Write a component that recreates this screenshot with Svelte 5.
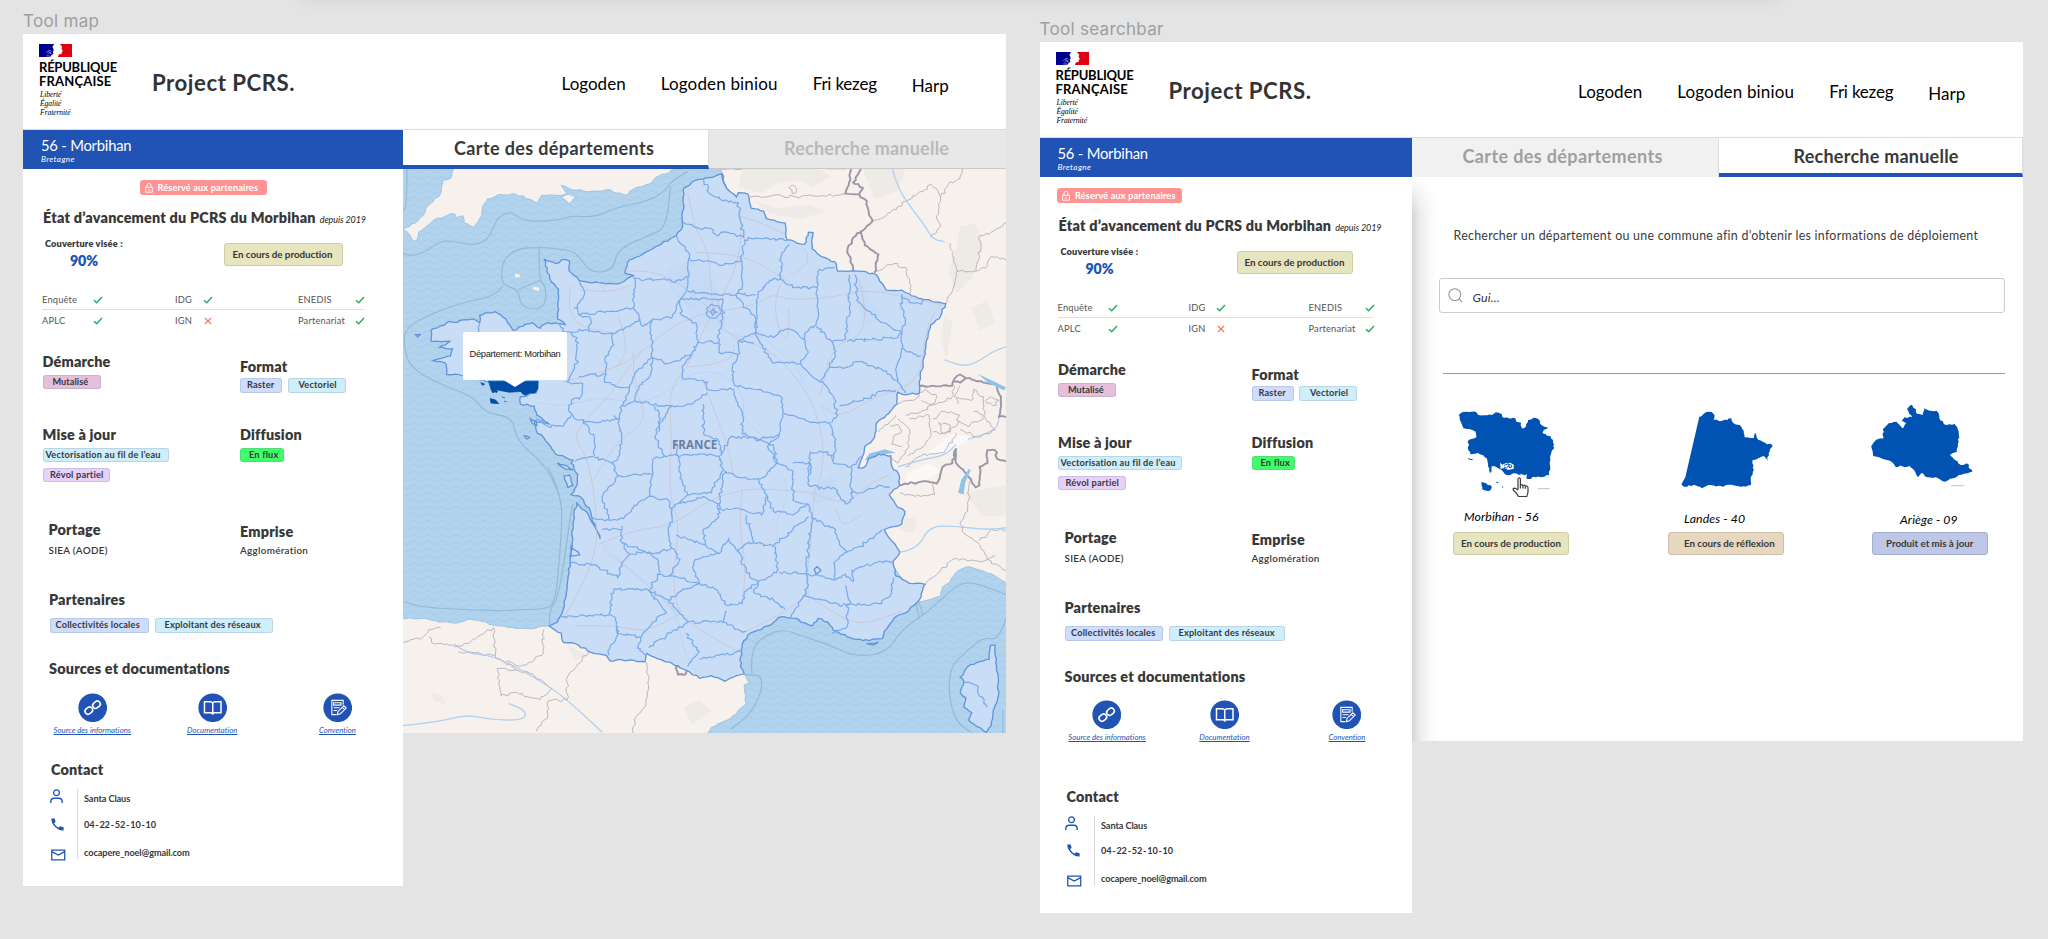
<script>
  // Deterministic noise gives the administrative borders their irregular edge.
  let seed = 7;
  function rnd() {
    seed = (seed * 16807) % 2147483647;
    return seed / 2147483647 - 0.5;
  }
  function rough(src, amp = 8, step = 9, close = false) {
    return src
      .trim()
      .split('|')
      .map((line) => {
        const p = line.trim().split(/\s+/).map((s) => s.split(',').map(Number));
        if (close) p.push(p[0]);
        let d = `M${p[0][0]},${p[0][1]}`;
        for (let i = 1; i < p.length; i++) {
          const [x0, y0] = p[i - 1];
          const [x1, y1] = p[i];
          const n = Math.max(1, Math.round(Math.hypot(x1 - x0, y1 - y0) / step));
          for (let k = 1; k <= n; k++) {
            const t = k / n;
            const a = k < n ? amp : 0;
            d += `L${(x0 + (x1 - x0) * t + rnd() * a).toFixed(1)},${(y0 + (y1 - y0) * t + rnd() * a).toFixed(1)}`;
          }
        }
        return close ? d + 'Z' : d;
      })
      .join('');
  }
  // Rounded polyline through the midpoints, for rivers, roads and sea limits.
  function smooth(src) {
    return src
      .trim()
      .split('|')
      .map((line) => {
        const p = line.trim().split(/\s+/).map((s) => s.split(',').map(Number));
        let d = `M${p[0]}`;
        for (let i = 1; i < p.length - 1; i++)
          d += `Q${p[i]} ${(p[i][0] + p[i + 1][0]) / 2},${(p[i][1] + p[i + 1][1]) / 2}`;
        return d + `L${p[p.length - 1]}`;
      })
      .join('');
  }

  const england = rough('140,20 130,50 110,55 105,90 70,125 60,150 25,180 8,187 20,195 35,220 45,215 48,195 90,160 140,145 145,155 162,150 165,170 190,182 210,150 215,120 225,105 260,93 300,93 330,105 355,115 365,95 400,95 430,90 425,85 415,68 440,80 490,85 530,80 580,95 605,75 640,65 660,45 690,35 705,20|415,100 435,92 455,100 435,118', 5, 9, true);
  const europe = rough('824,24 1570,20 1570,1150 1530,1125 1500,1112 1460,1100 1430,1115 1415,1140 1395,1155 1390,1180 1335,1195 1200,1000 1000,600|-5,1240 60,1240 100,1250 150,1252 175,1242 200,1245 240,1258 290,1265 330,1268 383,1260 500,1200 800,1300 885,1390 900,1415 885,1420 890,1470 850,1510 800,1535 785,1560 -5,1560', 4, 10, true);
  const france = rough('828,37 832,62 845,82 865,100 870,88 895,92 903,130 935,138 942,158 990,170 995,215 1040,228 1050,195 1062,196 1060,240 1085,262 1118,275 1125,300 1180,300 1225,310 1250,352 1290,352 1310,362 1340,375 1403,388 1385,430 1365,445 1352,500 1345,550 1335,600 1335,630 1300,635 1280,628 1278,660 1250,690 1225,712 1220,750 1195,775 1190,800 1178,832 1195,830 1205,808 1230,795 1262,800 1265,830 1282,850 1285,880 1258,905 1280,940 1298,950 1290,985 1245,1000 1260,1025 1285,1060 1268,1085 1275,1125 1310,1145 1350,1148 1335,1190 1300,1225 1270,1240 1245,1275 1240,1295 1190,1300 1150,1290 1120,1275 1100,1250 1075,1240 1060,1260 1030,1250 1020,1240 980,1235 945,1260 900,1280 880,1310 875,1370 885,1390 865,1395 835,1410 800,1395 770,1402 745,1385 700,1362 665,1350 635,1335 630,1358 590,1352 540,1355 530,1340 500,1335 450,1308 420,1305 415,1280 383,1260 405,1250 420,1215 430,1150 440,1060 447,960 455,928 485,960 515,1025 505,1000 490,950 465,912 440,905 455,880 457,850 440,820 445,812 400,795 375,760 350,730 345,705 385,715 352,690 345,665 310,660 310,640 350,630 355,600 300,620 230,600 150,580 120,580 118,550 85,542 130,530 135,510 100,508 130,490 80,490 80,460 120,440 190,430 205,440 205,420 245,410 265,425 290,460 340,440 360,455 380,440 425,445 405,430 408,350 385,320 370,268 400,280 415,270 435,272 435,300 460,325 530,335 560,335 600,312 578,305 590,270 650,240 710,205 725,185 730,75 760,55', 5, 9, true);
  const corsica = rough('1518,1312 1530,1312 1532,1360 1538,1400 1538,1450 1525,1490 1520,1530 1508,1548 1480,1530 1462,1515 1470,1495 1450,1480 1455,1455 1440,1440 1450,1410 1440,1400 1460,1370 1500,1355 1515,1350|335,700 350,705 352,718 340,712|320,746 333,750 326,755|405,820 430,828 445,838 425,836|422,855 436,852 445,880 432,886|40,472 52,472 46,478|440,1045 462,1068 440,1072|1065,1108 1072,1100 1082,1110 1070,1120|1200,1308 1230,1305 1215,1312', 4, 9, true);
  const borders = rough(`725,165 770,185 800,185 815,205 840,195 885,210|780,50 795,90 830,110 850,110 870,115 875,165 885,210|710,205 745,255 740,280 740,340 730,365 720,378|885,215 940,210 995,218|745,268 800,275 830,285 878,270|885,215 878,270 880,340 865,362 915,365|740,355 790,360 865,365|1000,228 980,260 978,320 950,325 920,365|978,322 1010,345 1072,345|1072,345 1075,300 1118,290|460,325 475,360 450,400 460,418 540,410 600,400 605,330 600,312|605,320 650,325 680,320 700,330 740,315|460,418 490,430 485,460 425,465 410,445|600,400 625,450 650,430 700,425 720,378|485,465 550,470 590,450 615,430|440,465 455,480 455,550 440,580 430,600 470,605 465,640 440,650|545,470 550,500 530,530 530,580 460,585|530,580 525,600 590,620 610,570 650,535|650,430 645,460 650,490 650,535 690,550 750,525 765,495|720,378 725,420 760,440 765,495 790,490 820,495|720,375 790,375 830,375 830,430 820,460 820,495|865,365 890,400 915,430 915,465 870,490 870,525 820,520 820,495|920,365 918,420 915,465 960,480 980,460 1010,460 1040,485|1072,345 1075,400 1070,445 1040,470 1040,485|1155,310 1155,400 1150,450 1145,485 1110,490 1070,450|1170,310 1175,380 1240,440 1290,465 1280,480 1150,490|1290,362 1290,400 1300,430 1290,465|1290,365 1310,385 1340,390 1345,375|1290,465 1290,510 1340,530|1290,510 1275,570 1280,600 1300,630|915,465 925,495 960,550 1030,550 1050,520 1040,485|1110,490 1120,530 1105,560 1080,600 1055,580 1030,550|1105,560 1150,560 1180,545 1250,570 1280,600|1130,665 1190,650 1240,625 1275,625|1080,600 1095,610 1115,640 1125,690 1110,710|870,490 910,495|870,525 855,560 860,610 910,620 980,640 985,680 975,745 920,755 880,740 880,690 860,625|650,535 640,590 615,610 605,650 570,665|750,525 725,560 725,590 790,600 790,620 860,620|605,650 670,665 700,665 750,660 790,630|590,620 570,665 565,700 550,690|440,650 435,680 450,700 500,710 560,700|350,700 380,720 420,720 440,690|470,705 500,750 500,800 450,815|560,700 570,760 560,810 545,820 500,805|545,820 560,855 600,850 650,850 650,810 680,800|655,665 670,700 655,750 680,800 715,800 710,760|700,665 675,700 665,735|780,660 780,740 820,760 825,800|715,800 770,795 820,800 830,840 800,900 740,905 720,860 715,800|825,800 850,750 900,750 960,770 970,820 930,860 880,860 835,840|985,685 1040,700 1055,710 1105,710 1120,770 1115,810|975,745 945,775 970,820|970,820 1010,840 1010,920 1050,930|1010,820 1050,820 1050,880 1090,890 1115,885|1055,850 1055,790 1100,790 1115,820 1160,830 1190,800|1160,830 1160,900 1190,900 1230,880 1260,885|1115,885 1145,930 1165,915 1160,900|650,850 640,910 600,940 575,970 540,975 520,915 560,855|640,910 690,920 700,970 690,1010 700,1050 650,1065 570,1035 570,990|570,1035 590,1065|740,905 700,940 700,970|720,930 780,910 820,930 820,965 780,1000 785,1040 710,1015|835,840 825,890 820,945 880,945 930,960 945,910 920,860|945,910 960,950 1010,960 1050,930|890,960 900,1000 910,1035 960,1045 1010,1000 1050,965|785,1040 820,1065 845,1025 870,1060 885,1040 910,1035|870,1060 890,1110 920,1145 970,1110 965,1045|820,1065 760,1080 755,1110 770,1145|1050,930 1060,970 1050,1050 1045,1120 975,1115|1060,970 1120,1000 1130,1040 1150,1060 1115,1090 1120,1135 1045,1120|1150,1060 1200,1035 1240,1000|1120,1135 1145,1120 1165,1140 1160,1110 1220,1090 1270,1085|1045,1120 1050,1150 1035,1185 1000,1240|1040,1180 1090,1190 1130,1205 1160,1200 1145,1150|1150,1200 1150,1260 1110,1280|1150,1205 1230,1200 1260,1180 1270,1130|920,1145 910,1170 960,1190 990,1215|770,1145 700,1125 660,1120|590,1065 640,1060 665,1085 665,1120 640,1165 590,1160 550,1160|440,1090 500,1095 560,1130 570,1090 590,1065|415,1235 500,1230 540,1230 545,1180 550,1160|640,1165 685,1225 650,1250 620,1290 560,1280 555,1240 540,1230|560,1260 560,1285 540,1320 535,1340|620,1290 610,1320 635,1340|700,1050 720,1080 690,1125|640,1165 690,1190 735,1160 770,1145 810,1160 840,1205 880,1200 890,1165 920,1145|690,1190 740,1250 700,1275 640,1320|740,1250 830,1250 840,1220|735,1280 770,1330 740,1370|770,1350 820,1340 875,1330|830,1250 870,1270 890,1275|490,965 540,975|520,1000 570,1000|205,440 200,475|788,400 800,390 820,395 825,412 812,428 795,425 788,412 788,400|796,410 806,402 815,412 804,420 796,410|1450,1410 1480,1420 1490,1450 1510,1480`, 8, 7);
  const frontier = rough('1160,20 1155,60 1145,90 1180,92 1200,110 1205,140 1215,165 1190,190 1165,210 1150,250 1165,290 1165,300|1185,190 1195,230 1230,255 1220,305|1185,24 1165,60 1190,75 1180,95|1335,612 1390,612 1420,610 1425,592 1440,580 1455,590 1440,602 1425,600|1455,590 1530,605 1545,640 1540,695 1558,695|1282,880 1340,870 1380,875 1395,830 1420,820 1430,780 1430,820 1465,860 1480,885 1490,880 1490,830 1510,820 1510,785 1530,785 1535,808 1558,815|828,37 832,62 845,82 865,100|710,1370 740,1372 735,1390 715,1392 710,1370', 6, 8);
  const regions = rough('900,100 960,95 1020,100 1145,92|1000,75 1012,68 1020,82 1008,90 1000,75|1215,165 1250,150 1300,112 1350,80 1365,65 1390,100 1380,150 1390,180 1365,210|1390,100 1410,65 1440,50 1450,20|1558,170 1520,195 1490,205 1490,260 1480,300 1430,300|1558,270 1520,260 1510,285 1480,300|1220,300 1270,280 1300,290 1315,340 1310,360|1415,225 1430,290 1425,340 1403,388|8,1305 60,1290 75,1270 105,1265|75,1290 90,1310 160,1315 200,1290 240,1265 245,1340 150,1330|245,1340 300,1380 340,1390 390,1430 360,1460 300,1440 260,1450 250,1375 300,1380|370,1270 365,1340 310,1370 275,1355|485,1325 455,1370 430,1400 430,1460 380,1465 380,1500 350,1545|635,1360 640,1400 630,1480 605,1510 600,1550|1285,900 1340,910 1375,905 1370,870|1465,860 1460,950 1440,980 1450,1010 1490,1040 1510,1080 1558,1110|1350,1148 1390,1110 1420,1080 1500,1085 1530,1070|1490,1030 1520,1000 1558,1000|1280,660 1320,650 1350,620 1380,640 1370,660 1340,650|1300,690 1340,680 1380,660 1420,640 1425,610|1280,700 1310,730 1305,780 1280,820 1260,800|1310,700 1360,690 1365,740 1350,770 1305,800|1370,700 1400,680 1440,690 1430,720 1400,740 1370,735|1430,640 1470,650 1475,620 1500,640 1500,700 1460,720 1430,700|1475,680 1500,690 1530,730 1490,750 1440,730|1440,610 1425,640 1435,660|1505,650 1520,640 1540,650 1525,665 1505,650|1300,830 1340,800 1400,790 1430,740|1260,720 1280,715 1290,735 1270,745 1265,770 1290,775|1385,710 1410,715 1415,735 1395,740 1385,710|1230,735 1255,715 1275,690', 8, 8);
  const seaLimits = smooth('8,252 30,262 70,245 110,215 160,225 200,230 230,210 250,155 280,140 300,150 320,165 400,165 440,150 500,155 550,130 640,110 680,85 695,60 740,30|695,70 690,180 640,205 560,240 548,300 490,305 460,260 440,245 400,240 360,235 300,240 265,270 260,320 270,340 305,350 310,395 350,405 375,390 375,340 358,325 358,235|305,350 360,325|265,340 248,368 160,385 60,425 12,460 10,500 25,560 100,605 190,640 220,685 290,695 300,760 370,820 410,900 418,960 410,1080 400,1190 380,1215 320,1215 260,1220 150,1215 60,1210 8,1195|380,830 405,880 415,940|445,930 438,960 425,1070 405,1190 385,1215 385,1255|875,1392 905,1392 930,1395 930,1440 900,1500 850,1540|905,1390 900,1320 950,1280 990,1270 1040,1290 1100,1310 1160,1340 1220,1340 1260,1320 1290,1270 1360,1220 1430,1150 1470,1140 1558,1175|1558,1240 1540,1300 1500,1290 1455,1330 1415,1370 1410,1450 1430,1520 1470,1550|1325,1195 1335,1240|1332,1190 1345,1230|18,24 18,120 8,140|1550,1490 1550,1550');
  const rivers = smooth('1265,20 1275,60 1300,110 1345,170 1370,215 1400,220|1400,540 1440,558 1480,550 1520,520 1558,505|1280,1062 1330,1055 1360,990 1430,990 1500,1000 1558,995|140,1310 170,1335 240,1340 340,1395 420,1450 520,1548|8,1530 100,1520 170,1500 240,1515 320,1515 325,1490 280,1470|1280,830 1340,810 1400,800 1430,770|1460,755 1530,735 1540,700|345,655 400,665 440,660 520,640 600,660 680,635 740,580 800,570 850,590 885,640 880,690 920,740 960,760|520,1035 560,1080 620,1130 680,1180 715,1240 730,1330 760,1380|820,455 880,485 920,470 960,500 1020,560 1045,615|990,860 1000,920 970,960 970,1040|1060,970 1050,1080 1050,1200|690,320 700,360 760,400');
  const roads = smooth('805,410 760,370 700,320 640,300 580,300|805,410 800,330 790,240 760,190 740,90|805,410 870,300 880,150 860,110|870,150 930,170 990,200|805,410 900,400 960,360 1000,380 1120,370 1200,350 1300,370 1390,390|805,410 840,480 930,500 1000,560 1060,650 1090,760 1085,850 1065,900|805,410 770,480 740,560 690,620 700,760 690,900 720,980 700,1130 715,1230 800,1290 870,1330|805,410 720,430 620,520 560,560 460,590 420,600|620,520 560,600 530,650 440,740 480,800 500,900 510,1040 470,1150 420,1240|600,520 600,620 640,700 560,760 500,860|510,1040 600,1000 700,990 790,920 880,890 960,890 1060,900|1065,900 1060,1000 1045,1120 1050,1180 960,1240 880,1280|1050,1180 1120,1230 1190,1260 1290,1220|1065,900 1140,940 1200,880 1260,850|715,1230 640,1150 520,1050|715,1230 640,1280 560,1260 450,1260|880,890 870,980 890,1100 880,1200|980,330 960,380 975,470 1000,490 1000,400|1180,320 1200,400 1185,480 1110,500 1080,640|1390,390 1350,440 1340,600 1220,640 1130,700 1080,660|460,350 530,360 590,340|530,360 510,330|560,420 590,500 560,560|440,340 420,440 560,470|780,600 840,760 860,860|740,560 850,550 860,500|1040,240 1060,270 1010,310|760,250 880,250 1000,330|1185,960 1140,1000 1120,940');

  const morbihan = rough('100,165 118,155 145,157 150,165 185,165 195,157 210,162 212,172 245,175 248,185 260,188 262,205 272,200 278,180 292,173 305,178 312,195 320,200 330,203 318,210 315,220 335,228 342,240 345,265 338,275 335,300 332,345 320,350 290,350 285,357 275,357 275,343 255,345 240,340 232,345 218,342 210,330 185,318 180,340 178,325 172,295 150,280 130,283 123,265 125,240 145,232 143,215 135,210 112,205 105,185|123,293 137,298 134,301 125,298|158,366 170,370 185,382 180,392 160,388|195,365 203,367 198,370|211,379 215,381 212,384', 5, 7, true);
  const landes = rough('720,170 742,155 757,165 755,180 775,183 790,180 800,175 806,190 822,195 832,212 834,232 858,234 862,218 870,240 906,256 896,280 894,302 884,288 870,295 855,300 858,330 852,348 850,375 825,380 800,374 780,380 740,375 725,385 705,374 680,380 672,373', 5, 7) + 'L682,352L718,170Z';
  const ariege = rough('1160,258 1172,240 1192,235 1190,208 1205,190 1225,185 1240,205 1250,190 1238,182 1245,172 1265,172 1252,148 1262,134 1275,148 1278,162 1292,165 1295,145 1310,152 1328,152 1335,175 1352,195 1375,192 1385,215 1385,245 1380,275 1362,285 1375,300 1390,315 1405,310 1420,335 1385,345 1370,355 1350,365 1325,352 1305,352 1290,338 1280,352 1270,330 1258,318 1222,320 1208,302 1180,292 1165,288', 5, 7, true);

  const results = [
    { id: 'mor', name: 'Morbihan - 56', status: 'En cours de production', d: morbihan, box: '85 105 298 315' },
    { id: 'lan', name: 'Landes - 40', status: 'En cours de réflexion', d: landes, box: '637.5 105 298 315' },
    { id: 'ari', name: 'Ariège - 09', status: 'Produit et mis à jour', d: ariege, box: '1162 105 298 315' }
  ];
</script>

{#snippet check()}
  <svg class="tick" viewBox="0 0 10 8"><path d="M1 4.2 3.7 6.8 9 1" fill="none" stroke="#27ae60" stroke-width="1.5" /></svg>
{/snippet}

{#snippet header()}
  <header>
    <div class="logo">
      <svg class="flag" viewBox="117 131 99 39">
        <path fill="#000091" d="M117 131H162L157 139 161 149 158 153 160 160 153 165 152 170H117Z" />
        <path fill="none" stroke="#fff" stroke-width="1.5" d="M138 157c5-7 12-8 16-5M142 161c4-5 9-5 12-1M139 166c6 1 10-1 14 3M147 153l7 8" />
        <path fill="#e1000f" d="M216 131H179L186 139 184 145 188 152 184 155 185 160 176 162 173 170H216Z" />
      </svg>
      <strong class="rf">RÉPUBLIQUE</strong>
      <strong class="rf fr">FRANÇAISE</strong>
      <span class="motto">Liberté<br />Égalité<br />Fraternité</span>
    </div>
    <h1>Project PCRS.</h1>
    <nav>
      <span>Logoden</span><span class="bin">Logoden biniou</span><span class="fri">Fri kezeg</span><span class="harp">Harp</span>
    </nav>
  </header>
{/snippet}

{#snippet sidebar()}
  <aside>
    <div class="place"><span>56 - Morbihan</span><em>Bretagne</em></div>
    <div class="body">
      <div class="reserved">
        <svg viewBox="0 0 8 10"><path d="M.6 4.2h6.8v5H.6zM2 4.2V2.4a2 2 0 0 1 4 0v1.8M2.8 6.9h2.4" fill="none" stroke="#fff" stroke-width=".9" /></svg>
        <span>Réservé aux partenaires</span>
      </div>
      <div class="title"><h2>État d’avancement du PCRS du Morbihan</h2><em>depuis 2019</em></div>
      <div class="cover">
        <div class="rate"><span>Couverture visée :</span><b>90%</b></div>
        <div class="status mor">En cours de production</div>
      </div>
      <div class="checks">
        <div class="line top">
          <span>Enquête</span>{@render check()}<span class="idg">IDG</span>{@render check()}<span>ENEDIS</span>{@render check()}
        </div>
        <div class="line">
          <span>APLC</span>{@render check()}<span class="idg">IGN</span>
          <svg class="tick cross" viewBox="0 0 8 8"><path d="M.8.8 7.2 7.2M7.2.8.8 7.2" fill="none" stroke="#f2694c" stroke-width="1.1" /></svg>
          <span>Partenariat</span>{@render check()}
        </div>
      </div>
      <div class="pair">
        <section><h3>Démarche</h3><div class="tags"><i class="tag pink">Mutalisé</i></div></section>
        <section class="format"><h3>Format</h3><div class="tags"><i class="tag blue raster">Raster</i><i class="tag cyan vec">Vectoriel</i></div></section>
      </div>
      <div class="pair">
        <section><h3>Mise à jour</h3><div class="tags col"><i class="tag cyan fil">Vectorisation au fil de l’eau</i><i class="tag violet">Révol partiel</i></div></section>
        <section><h3>Diffusion</h3><div class="tags"><i class="tag green">En flux</i></div></section>
      </div>
      <div class="pair inset">
        <section><h3>Portage</h3><p>SIEA (AODE)</p></section>
        <section class="emprise"><h3>Emprise</h3><p class="agg">Agglomération</p></section>
      </div>
      <section class="partners">
        <h3>Partenaires</h3>
        <div class="tags"><i class="tag blue local">Collectivités locales</i><i class="tag cyan reseau">Exploitant des réseaux</i></div>
      </section>
      <section class="sources">
        <h3>Sources et documentations</h3>
        <div class="docs">
          <a href="#source">
            <svg viewBox="0 0 30 30"><circle cx="15" cy="15" r="14.6" fill="#2053b3" /><g fill="none" stroke="#fff" stroke-width="1.6"><rect x="-4.100" y="-3" width="8.200" height="6" rx="3" transform="translate(11 17.900) rotate(-38)" /><rect x="-4.100" y="-3" width="8.200" height="6" rx="3" transform="translate(18.800 11.900) rotate(-38)" /></g></svg>
            <span>Source des informations</span>
          </a>
          <a href="#doc">
            <svg viewBox="0 0 30 30"><circle cx="15" cy="15" r="14.6" fill="#2053b3" /><path d="M6.6 9h5.6q2.1 0 2.8 1.3Q15.700 9 17.800 9h5.600v11h-7l-1.400 1.300-1.400-1.300h-7zM15 10.300v9.700" fill="none" stroke="#fff" stroke-width="1.500" /></svg>
            <span>Documentation</span>
          </a>
          <a href="#convention">
            <svg viewBox="0 0 30 30"><circle cx="15" cy="15" r="14.6" fill="#2053b3" /><path d="M20.500 12V7.500H9v14.500h4.500M10.800 10h7.500v2.300h-7.500zM10.800 15h6M10.800 17.800h3.500M14.500 22l.8-3.200 5.900-5.800 2.400 2.300-5.900 5.800zM19.600 14.600l2.400 2.300" fill="none" stroke="#fff" stroke-width="1.100" /></svg>
            <span>Convention</span>
          </a>
        </div>
      </section>
      <section class="contact">
        <h3>Contact</h3>
        <div class="card">
          <div class="icons">
            <svg class="person" viewBox="0 0 13 14"><circle cx="6.500" cy="3.700" r="2.900" fill="none" stroke="#2053b3" stroke-width="1.300" /><path d="M.8 14v-1.300q0-3.500 3.500-3.500h4.400q3.500 0 3.500 3.500V14" fill="none" stroke="#2053b3" stroke-width="1.400" /></svg>
            <svg class="phone" viewBox="0 0 13 13"><path d="M.3.4h3.400l.9 3.300-1.500 1.500q1.400 3 4.500 4.600l1.600-1.500 3.400.9v3.300Q8 12.800 4.200 9 .3 5.200.3.400z" fill="#2053b3" /></svg>
            <svg class="mail" viewBox="0 0 15 12"><path d="M.8 1h13.400v10H.8zM.8 2.500l6.700 3.600 6.700-3.600" fill="none" stroke="#2053b3" stroke-width="1.300" /></svg>
          </div>
          <div class="lines"><span>Santa Claus</span><span class="tel">04 - 22 - 52 - 10 - 10</span><span class="mel">cocapere_noel@gmail.com</span></div>
        </div>
      </section>
    </div>
  </aside>
{/snippet}

<main>
  <div class="glow"></div>
  <div class="artboard one">
    <div class="label">Tool map</div>
    <div class="frame">
      {@render header()}
      <div class="content">
        {@render sidebar()}
        <div class="panel">
          <div class="tabs">
            <div class="tab on"><span class="carte">Carte des départements</span></div>
            <div class="tab off grey"><span class="rech">Recherche manuelle</span></div>
          </div>
          <div class="map">
            <svg viewBox="8 24 1550 1526" preserveAspectRatio="none">
              <defs>
                <pattern id="waves" width="36" height="19" patternUnits="userSpaceOnUse">
                  <path d="M0 6q5 0 9 4t9 4q5 0 9-4t9-4" fill="none" stroke="#a2c8e4" stroke-width="2.200" />
                </pattern>
              </defs>
              <rect x="8" y="24" width="1550" height="1526" fill="#b2d3ee" />
              <rect x="8" y="24" width="1550" height="1526" fill="url(#waves)" />
              <path d={seaLimits} fill="none" stroke="#91bad5" stroke-width="3" />
              <path d="{england}{europe}" fill="#f6f1ed" stroke="#8dbde2" stroke-width="2" />
              <path fill="#eeeae6" d="M880 24h200l30 20-50 30-30-20-60 10-40 25-60-15zM910 110l60 20 80-10 40 20-60 20-80-15zM1190 24h110l-20 60-60 20zM1440 180l40-10 20 60-30 90-40 40-20-60 20-60zM1470 400l40-20 20 60-40 20zM1450 900l108-20v80l-60 5zM1400 420l20 20-15 100-15-60zM1290 970l40-5-10 45-35-10zM80 1440l30 10 5 20-25-5zM730 1480l40-20 30 30-50 40zM430 1310l50 30-30 15z" />
              <path fill="#fff" d="M1300 850l60-30 30 20-40 30-50 8zM1360 790l60-50 50 10-70 50z" opacity=".6" />
              <path d={rivers} fill="none" stroke="#aed2ef" stroke-width="3" />
              <path d={regions} fill="none" stroke="#b6b0ba" stroke-width="2.400" />
              <path d={frontier} fill="none" stroke="#9b96a6" stroke-width="5" />
              <path fill="#90c3e8" d="M1195 812l12-18 40-12 28 10-45 5-25 15zM1485 578l45 22 28 15-5 8-40-20zM1435 900l8-35 20-30 4 4-14 34-4 32z" />
              <path d="{france}{corsica}" fill="#caddf7" stroke="#5f93da" stroke-width="3.400" />
              <path d="M680 300q80-60 120 20t40 120-80 0zM1180 330l60 90-40 30-30-60zM1050 900l60-50 20 60-60 20z" fill="#bcd5ee" opacity=".35" />
              <path d={roads} fill="none" stroke="#c8c2cb" stroke-width="2.200" opacity=".85" />
              <path d={rivers} fill="none" stroke="#a9d0f3" stroke-width="2.500" opacity=".6" />
              <path d={borders} fill="none" stroke="#7aaaea" stroke-width="3.200" />
              <path d="M228 598h127v20l-8 12-14 0-10 6-8-4-4-6-30 2-30-6-12 8-4-8zM232 645l14 4 8 10-20-2zM246 620l5 6-4 4zM262 640l8 4M268 652l6 2M208 602l10 4-6 3z" fill="#004da7" stroke="#004da7" stroke-width="2" />
              <path d="M295 308l10 0 6 8-14 2zM342 342l18 4-4 8-14-4z" fill="#f6f1ed" />
            </svg>
            <span class="country">FRANCE</span>
            <div class="tip">Département: Morbihan</div>
          </div>
        </div>
      </div>
    </div>
  </div>

  <div class="artboard two">
    <div class="label sb">Tool searchbar</div>
    <div class="frame">
      {@render header()}
      <div class="content">
        {@render sidebar()}
        <div class="panel">
          <div class="tabs">
            <div class="tab off"><span class="carte">Carte des départements</span></div>
            <div class="tab on"><span class="rech">Recherche manuelle</span></div>
          </div>
          <div class="search">
            <p>Rechercher un département ou une commune afin d’obtenir les informations de déploiement</p>
            <div class="field">
              <svg viewBox="0 0 15 15"><circle cx="6.800" cy="6.600" r="5.900" fill="none" stroke="#929292" stroke-width="1.100" /><path d="M11 10.800 14.200 14" stroke="#929292" stroke-width="1.100" /></svg>
              <em>Gui...</em>
            </div>
            <hr />
            <div class="results">
              {#each results as r}
                <div class="result {r.id}">
                  <svg class="shape" viewBox={r.box} preserveAspectRatio="none">
                    <path d={r.d} fill="#0053b3" />
                    {#if r.id === 'mor'}
                      <path d="M206 308l6 6 8-4 12-2 9 6v12l-14 4-10-6-10 2zM160 268l-12 12 10 6-14-2z" fill="#fff" />
                      <path d="M216 316l10-4 10 4-2 8-6-5-6 5-6-3M228 310l2 14" fill="none" stroke="#0053b3" stroke-width="2.500" />
                      <path d="M303 386h30" stroke="#aaa" stroke-width="2" />
                    {:else if r.id === 'ari'}
                      <path d="M1366 377h33" stroke="#aaa" stroke-width="2" />
                    {/if}
                  </svg>
                  {#if r.id === 'mor'}
                    <svg class="hand" viewBox="0 0 17 21"><path d="M6 12.500V2.300Q6 .8 7.200.8T8.400 2.300V8Q9.600 7 10.800 8.400 12.200 7.400 13.200 9q2.800-.7 2.800 2v3.500q0 2.500-1.300 5H6.500Q5.200 16.500 1.300 13 .6 11.300 2.600 11.100 4.300 11.200 6 13.200M8.400 8v3.500M10.900 8.600v3M13.300 9.200v2.600" fill="#fff" stroke="#3c3c3c" stroke-width="1.200" stroke-linejoin="round" /></svg>
                  {/if}
                  <em>{r.name}</em>
                  <div class="status {r.id}">{r.status}</div>
                </div>
              {/each}
            </div>
          </div>
        </div>
      </div>
    </div>
  </div>
</main>

<style>
  :global(body) { background: #e4e4e4; }
  * { box-sizing: border-box; }
  h1, h2, h3, p { margin: 0; }
  svg { display: block; flex: none; }
  main {
    position: relative;
    display: flex;
    align-items: flex-start;
    width: 2048px;
    height: 939px;
    overflow: hidden;
    background: #e4e4e4;
    font-family: Lato, "Open Sans", sans-serif;
    color: #383838;
    white-space: nowrap;
  }
  .glow { position: absolute; left: 300px; top: -24px; width: 1480px; height: 18px; box-shadow: 0 0 18px 2px rgba(0, 0, 0, .12); }
  .artboard { width: 983px; flex: none; }
  .one { margin-left: 23px; padding-top: 11px; --side: 380px; --bar: 39px; }
  .two { margin-left: 33.500px; padding-top: 19px; --side: 372px; --bar: 39px; }
  .label { height: 23px; font: 17px/20px Inter, sans-serif; letter-spacing: .018em; color: #9e9e9e; }

  header { height: 96px; display: flex; background: #fff; border-bottom: 1px solid #dcdcdc; color: #000; }
  .logo { width: 113px; margin-left: 16px; padding-top: 9.500px; display: flex; flex-direction: column; }
  .flag { width: 33.300px; height: 13.300px; margin-bottom: 4.200px; }
  .rf { font-size: 13px; line-height: 13.600px; font-weight: 700; letter-spacing: -.018em; }
  .fr { letter-spacing: .014em; }
  .motto { margin-top: 2.800px; margin-left: 1px; font: italic 7.600px/8.900px "Liberation Serif", serif; letter-spacing: -.01em; }
  h1 { font-size: 22.200px; line-height: 30px; font-weight: 700; letter-spacing: .024em; color: #333; margin-top: 34px; width: 409.500px; }
  nav { display: flex; margin-top: 40px; gap: 35px; font-size: 17px; line-height: 20px; }
  nav span { letter-spacing: .001em; }
  nav .bin { letter-spacing: .01em; }
  nav .fri { letter-spacing: -.012em; }
  nav .harp { margin-top: 2px; }

  .content { display: flex; align-items: flex-start; }
  aside { width: var(--side); background: #fff; position: relative; z-index: 1; flex: none; }
  .place { height: var(--bar); background: #2053b3; color: #fff; padding: 6px 0 0 18px; display: flex; flex-direction: column; }
  .place span { font-size: 14.800px; line-height: 18px; letter-spacing: -.015em; }
  .place em { font-size: 8.200px; line-height: 11px; letter-spacing: .05em; }
  .body { padding-top: 11px; display: grid; grid-template-rows: 28px 27.500px 55.500px 61.700px 73.300px 95.500px 70px 69px 101px 124.500px; }
  .two .body { grid-template-rows: 28px 27.500px 55.500px 61.700px 73.300px 95.500px 70px 69px 119.500px 125.500px; }
  .reserved { width: 127.500px; height: 15px; margin-left: 116.500px; background: #ff9393; border-radius: 3px; display: flex; align-items: center; gap: 5px; padding-left: 5px; color: #fff; font-size: 9.200px; font-weight: 700; letter-spacing: .014em; }
  .two .reserved { margin-left: 17.500px; width: 125px; }
  .reserved svg { width: 8px; height: 10px; }
  .title { display: flex; align-items: baseline; gap: 4px; padding-left: 20px; line-height: 20px; }
  .two .title { padding-left: 19px; }
  h2 { font-size: 14.400px; line-height: 20px; font-weight: 800; letter-spacing: .014em; }
  .title em { font-size: 9px; letter-spacing: -.01em; color: #222; }
  .cover { display: flex; padding-left: 22px; }
  .two .cover { padding-left: 21px; }
  .rate { width: 179px; display: flex; flex-direction: column; margin-top: -1px; }
  .two .rate { width: 176px; }
  .rate span { font-size: 9.200px; line-height: 17px; font-weight: 800; letter-spacing: .018em; }
  .rate b { margin-left: 25px; font-size: 14.200px; line-height: 17px; font-weight: 800; color: #2053b3; letter-spacing: -.01em; }
  .status { height: 23px; width: 119px; padding-left: 7.500px; border: 1px solid; border-radius: 3px; font-size: 9.800px; line-height: 21px; font-weight: 700; letter-spacing: -.003em; }
  .cover .status { margin-top: 7px; }
  .two .status { width: 116px; padding-left: 7px; }
  .status.mor { background: #e7e5bf; border-color: #cfcda4; }
  .status.lan { background: #e7d7bf; border-color: #cdbfab; }
  .status.ari { background: #bfc7e8; border-color: #a4add1; }
  .two .result.lan .status { padding-left: 15px; }
  .two .result.ari .status { padding-left: 13px; }
  .checks { width: 322px; margin-left: 19px; font-size: 9.300px; letter-spacing: .02em; color: #555; }
  .two .checks { width: 315px; margin-left: 18px; }
  .line { display: grid; grid-template-columns: 51px 82px 27.500px 95.500px 56.500px 10px; align-items: center; height: 22px; }
  .two .line { grid-template-columns: 50px 81px 27px 93px 56px 10px; }
  .line.top { height: 18.500px; border-bottom: 1px solid #dfdfdf; }
  .tick { width: 10px; height: 8px; }
  .cross { width: 8px; height: 8px; margin-left: 1px; }
  .pair { display: grid; grid-template-columns: 197.500px 1fr; padding-left: 19.500px; }
  .two .pair { grid-template-columns: 193.500px 1fr; padding-left: 18.500px; }
  h3 { font-size: 14.400px; line-height: 18px; font-weight: 800; letter-spacing: .012em; }
  .format { padding-top: 5px; }
  .tags { display: flex; gap: 5.500px; margin-top: 4px; }
  .format .tags { margin-top: 2.500px; }
  .tags.col { flex-direction: column; }
  .tag { display: block; height: 14.500px; border: 1px solid rgba(120, 140, 160, .25); border-radius: 3px; font-style: normal; font-size: 9.200px; line-height: 12.500px; font-weight: 700; letter-spacing: .02em; padding-left: 9px; }
  .pink { width: 58px; background: #e6bfdb; letter-spacing: .003em; }
  .blue { background: #cedcfd; }
  .cyan { background: #cfeefc; }
  .raster { width: 42px; padding-left: 6px; }
  .vec { width: 58px; padding-left: 10px; }
  .fil { width: 126.500px; padding-left: 2px; }
  .two .fil { width: 124px; padding-left: 1.500px; }
  .violet { width: 67.700px; background: #e7d1fb; padding-left: 6.500px; }
  .green { width: 43.500px; background: #40fd6a; padding-left: 8px; }
  .inset { padding-left: 25.500px; grid-template-columns: 191.500px 1fr; }
  .two .inset { padding-left: 25px; grid-template-columns: 187px 1fr; }
  p { font-size: 9.900px; line-height: 14px; font-weight: 600; letter-spacing: .03em; margin-top: 3.500px; }
  .emprise { padding-top: 2px; }
  .emprise p { margin-top: 1.500px; }
  .partners { padding-left: 26px; }
  .two .partners { padding-left: 25px; }
  .partners .tags { margin-top: 9px; margin-left: .5px; }
  .local { width: 99.500px; padding-left: 5px; }
  .reseau { width: 118.500px; }
  .two .local { width: 98px; }
  .two .reseau { width: 116px; }
  .sources h3 { padding-left: 26px; letter-spacing: .014em; }
  .two .sources h3 { padding-left: 25px; }
  .docs { display: grid; grid-template-columns: 138.500px 101.500px 149px; margin-top: 14.500px; }
  .two .docs { grid-template-columns: 135px 100px 145px; margin-top: 13.500px; }
  .docs a { display: flex; flex-direction: column; align-items: center; font-size: 7.700px; line-height: 10px; font-style: italic; letter-spacing: .006em; color: #2053b3; text-decoration: underline; }
  .docs svg { width: 29.500px; height: 29.500px; margin-bottom: 2.500px; }
  .contact { padding-left: 28px; }
  .two .contact { padding-left: 27px; }
  .card { display: flex; margin-top: 10px; }
  .icons { width: 26.500px; height: 70px; border-right: 1px solid #d8d8d8; }
  .two .icons { width: 28px; }
  .icons svg { overflow: visible; }
  .person { width: 13px; height: 14px; margin-left: -1.500px; }
  .phone { width: 13px; height: 13px; margin-top: 14.500px; }
  .mail { width: 14.500px; height: 12px; margin-top: 18px; }
  .lines { padding-left: 6.500px; padding-top: 2px; display: grid; grid-template-rows: 25.500px 28px 16px; font-size: 9.200px; line-height: 16px; font-weight: 700; letter-spacing: -.012em; }
  .tel { word-spacing: -1.300px; }

  .panel { flex: 1; }
  .two .panel { background: #fff; height: 603px; }
  .tabs { display: flex; height: var(--bar); font-size: 18px; font-weight: 700; line-height: 37px; }
  .tab { flex: 1; }
  .tab.on { background: #fff; border-bottom: 4px solid #2053b3; border-right: 1px solid #dcdcdc; }
  .tab.off { background: #f1f1f1; color: #9f9f9f; }
  .tab.grey { background: #e8e8e8; color: #b9b9b9; border-bottom: 1px solid #c8c8c8; }
  .one .tab.on { flex: 0 0 306px; }
  .two .tab.off { flex: 0 0 307px; border-right: 1px solid #dcdcdc; }
  .tab span { margin-left: 51px; }
  .tab .carte { letter-spacing: .021em; }
  .tab .rech { letter-spacing: .013em; margin-left: 75px; }

  .map { position: relative; height: 564px; overflow: hidden; }
  .map > svg { width: 603px; height: 564px; }
  .country { position: absolute; left: 269px; top: 267px; font: 700 11.600px/18px "Open Sans", sans-serif; color: #6a809f; }
  .tip { position: absolute; left: 60px; top: 163px; width: 104px; height: 48px; background: #fff; border-radius: 2px; text-align: center; font: 9.300px/44px "Liberation Sans", sans-serif; letter-spacing: -.035em; color: #222; }
  .tip::after { content: ""; position: absolute; left: 39px; top: 47px; border: solid transparent; border-width: 8px 13px 0; border-top-color: #fff; }

  .search { height: 564px; padding: 50px 18px 0 27px; background: linear-gradient(#fff, rgba(255, 255, 255, 0) 36px), linear-gradient(90deg, #d6d6d6 0, #ececec 8px, #fafafa 18px, #fff 26px); }
  .search p { margin: 0 0 0 15px; font-size: 12.400px; line-height: 18px; font-weight: 400; letter-spacing: .022em; color: #3a3a3a; }
  .field { margin-top: 32.500px; height: 35.500px; border: 1px solid #ccc; border-radius: 3px; background: #fff; display: flex; align-items: center; gap: 9.500px; padding: 0 0 0 8.500px; }
  .field svg { width: 15px; height: 15px; }
  .field em { font-size: 12.400px; margin-top: 5px; letter-spacing: .012em; }
  hr { margin: 60px 0 0 4px; border: 0; border-top: 1.500px solid #7b9bdc; }
  .results { margin-top: 21px; padding-left: 14.500px; display: grid; grid-template-columns: 215px 204px 116px; }
  .result { position: relative; }
  .shape { width: 116px; height: 105px; overflow: visible; }
  .result em { display: block; height: 24px; margin: 7.500px 0 0 11px; font-size: 12.300px; line-height: 18px; letter-spacing: .008em; color: #000; }
  .result.lan em { margin: 9.500px 0 0 16px; height: 22px; }
  .result.ari em { margin: 10.500px 0 0 28px; height: 21px; }
  .hand { position: absolute; left: 58.500px; top: 82px; width: 17px; height: 21px; }
</style>
